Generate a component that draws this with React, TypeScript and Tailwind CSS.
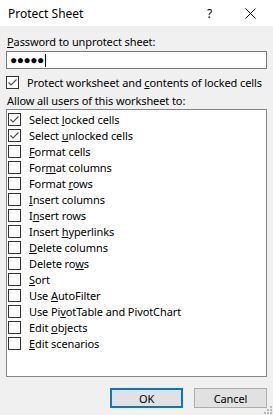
import React from "react";

const items: { label: React.ReactNode; checked?: boolean }[] = [
  { label: <>Select <u>l</u>ocked cells</>, checked: true },
  { label: <>Select <u>u</u>nlocked cells</>, checked: true },
  { label: <><u>F</u>ormat cells</> },
  { label: <>For<u>m</u>at columns</> },
  { label: <>Format <u>r</u>ows</> },
  { label: <><u>I</u>nsert columns</> },
  { label: <>I<u>n</u>sert rows</> },
  { label: <>Insert <u>h</u>yperlinks</> },
  { label: <><u>D</u>elete columns</> },
  { label: <>Delete ro<u>w</u>s</> },
  { label: <><u>S</u>ort</> },
  { label: <>Use <u>A</u>utoFilter</> },
  { label: <>Use Pi<u>v</u>otTable and PivotChart</> },
  { label: <>Edit <u>o</u>bjects</> },
  { label: <><u>E</u>dit scenarios</> },
];

function Box({ checked }: { checked?: boolean }) {
  return (
    <div className="w-[13px] h-[13px] border border-[#333333] bg-white flex items-center justify-center shrink-0">
      {checked && (
        <svg width="11" height="11" viewBox="0 0 11 11">
          <polyline points="1.5,5.5 4,8 9.5,2.5" fill="none" stroke="#4d4d4d" strokeWidth="1.1" />
        </svg>
      )}
    </div>
  );
}

export default function App() {
  return (
    <div
      className="relative w-[273px] h-[415px] bg-[#f0f0f0] text-black text-[11px] tracking-[-0.1px] leading-[15px] overflow-hidden"
      style={{ fontFamily: '"Segoe UI", "Noto Sans", sans-serif' }}
    >
      <div className="h-[26px] bg-white flex items-center pl-[8px] text-[12px] tracking-normal">
        <span className="flex-1">Protect Sheet</span>
        <span className="w-[10px] mr-[28px]">?</span>
        <svg width="11" height="11" viewBox="0 0 11 11" className="mr-[17px]">
          <path d="M0.5 0.5 L10.5 10.5 M10.5 0.5 L0.5 10.5" stroke="#000" strokeWidth="1" />
        </svg>
      </div>
      <div className="px-[6px]">
        <div className="mt-[8px] pl-[1px]">
          <u>P</u>assword to unprotect sheet:
        </div>
        <div className="mt-[2px] h-[18px] bg-white border border-[#7a7a7a] flex items-center pl-[3px]">
          <span className="tracking-[-0.5px] text-[12px] leading-[14px]">●●●●●</span>
          <span className="ml-[1px] w-[1px] h-[13px] bg-black" />
        </div>
        <div className="mt-[6px] flex items-center h-[14px]">
          <Box checked />
          <span className="ml-[8px]">
            Protect worksheet and <u>c</u>ontents of locked cells
          </span>
        </div>
        <div className="mt-[4px] h-[16px] pl-[1px]">Allow all users of this worksheet to:</div>
        <div className="h-[268px] bg-white border border-[#828790] pt-[1px]">
          {items.map((it, i) => (
            <div key={i} className="h-[16px] flex items-center pl-[1px]">
              <Box checked={it.checked} />
              <span className="ml-[8px]">{it.label}</span>
            </div>
          ))}
        </div>
        <div className="mt-[11px] flex justify-end gap-[11px]">
          <button className="w-[73px] h-[20px] bg-[#e1e1e1] border-2 border-[#0078d7] flex items-center justify-center leading-[15px]">
            OK
          </button>
          <button className="w-[73px] h-[20px] bg-[#e1e1e1] border border-[#adadad] flex items-center justify-center leading-[15px]">
            Cancel
          </button>
        </div>
      </div>
      <svg className="absolute right-[1px] bottom-[1px]" width="8" height="8" viewBox="0 0 8 8">
        <rect x="6" y="0" width="2" height="2" fill="#b8b8b8" />
        <rect x="3" y="3" width="2" height="2" fill="#b8b8b8" />
        <rect x="6" y="3" width="2" height="2" fill="#b8b8b8" />
        <rect x="0" y="6" width="2" height="2" fill="#b8b8b8" />
        <rect x="3" y="6" width="2" height="2" fill="#b8b8b8" />
        <rect x="6" y="6" width="2" height="2" fill="#b8b8b8" />
      </svg>
    </div>
  );
}
